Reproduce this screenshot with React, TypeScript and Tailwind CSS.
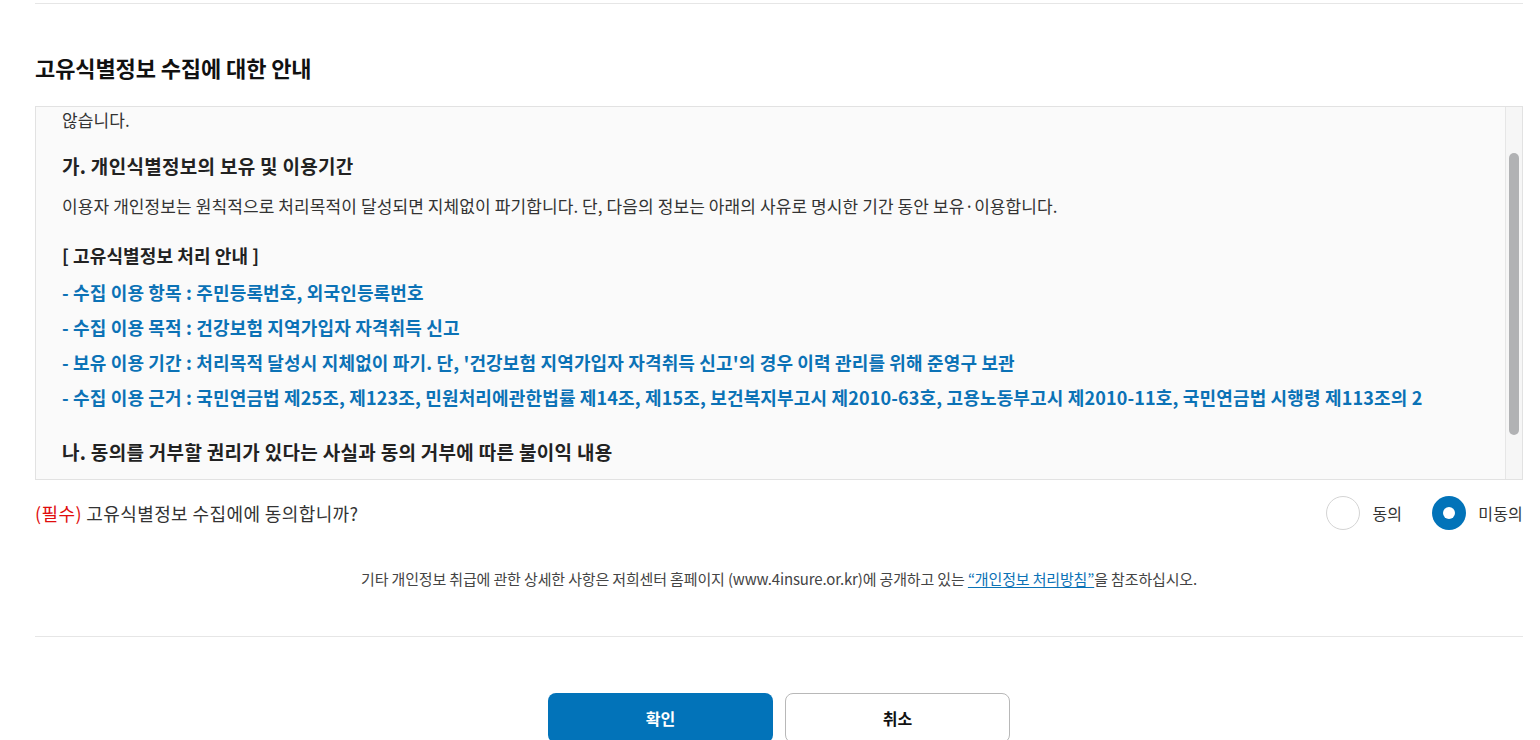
const FONT = "font-['Noto_Sans_CJK_KR','Noto_Sans',sans-serif]";

const ITEMS = [
  { label: "수집 이용 항목", value: "주민등록번호, 외국인등록번호" },
  { label: "수집 이용 목적", value: "건강보험 지역가입자 자격취득 신고" },
  {
    label: "보유 이용 기간",
    value: "처리목적 달성시 지체없이 파기. 단, '건강보험 지역가입자 자격취득 신고'의 경우 이력 관리를 위해 준영구 보관",
  },
  {
    label: "수집 이용 근거",
    value:
      "국민연금법 제25조, 제123조, 민원처리에관한법률 제14조, 제15조, 보건복지부고시 제2010-63호, 고용노동부고시 제2010-11호, 국민연금법 시행령 제113조의 2",
  },
];

function Radio({ label, checked }: { label: string; checked?: boolean }) {
  return (
    <label className="flex items-center gap-[12px]">
      {checked ? (
        <span className="flex h-[34px] w-[34px] items-center justify-center rounded-full bg-[#0273b9]">
          <span className="h-[12px] w-[12px] rounded-full bg-white" />
        </span>
      ) : (
        <span className="h-[34px] w-[34px] rounded-full border border-[#d4d4d4] bg-white" />
      )}
      <span className="text-[16px] tracking-[0.2px] text-[#333]">{label}</span>
    </label>
  );
}

/** 고유식별정보 수집 동의 블록 */
export default function App() {
  return (
    <div className={`${FONT} min-h-[740px] bg-white`}>
      <div className="ml-[35px] w-[1488px]">
        <div className="mt-[3px] h-px bg-[#e6e6e6]" />

        <h2 className="mt-[47px] text-[22px] leading-[33px] font-bold tracking-[-0.1px] text-[#111]">
          고유식별정보 수집에 대한 안내
        </h2>

        <div className="mt-[22px] flex h-[374px] border border-[#e2e2e2] bg-[#fafafa]">
          <div className="flex-1 overflow-hidden pl-[26px]">
            <p className="text-[17px] leading-[25px] tracking-[0.1px] text-[#333]">않습니다.</p>
            <h3 className="mt-[20px] text-[19px] leading-[28px] font-bold tracking-[0.3px] text-[#222]">
              가. 개인식별정보의 보유 및 이용기간
            </h3>
            <p className="mt-[14px] text-[17px] leading-[24px] tracking-[0.1px] text-[#333]">
              이용자 개인정보는 원칙적으로 처리목적이 달성되면 지체없이 파기합니다. 단, 다음의 정보는 아래의 사유로
              명시한 기간 동안 보유·이용합니다.
            </p>
            <p className="mt-[24px] text-[18px] leading-[27px] font-bold tracking-[0.1px] text-[#222]">
              [ 고유식별정보 처리 안내 ]
            </p>
            <ul className="mt-[6px]">
              {ITEMS.map((it) => (
                <li
                  key={it.label}
                  className="text-[18px] leading-[35px] font-bold tracking-[0.15px] whitespace-nowrap text-[#0b72b6]"
                >
                  - {it.label} : {it.value}
                </li>
              ))}
            </ul>
            <h3 className="mt-[23px] text-[19px] leading-[28px] font-bold tracking-[0.3px] text-[#222]">
              나. 동의를 거부할 권리가 있다는 사실과 동의 거부에 따른 불이익 내용
            </h3>
          </div>
          <div className="flex w-[17px] justify-center border-l border-[#e6e6e6] bg-[#f6f6f6] pt-[46px]">
            <div className="h-[282px] w-[10px] rounded-full bg-[#b1b2b4]" />
          </div>
        </div>

        <div className="mt-[16px] flex h-[34px] items-center justify-between">
          <p className="text-[18px] tracking-[0.4px] text-[#333]">
            <span className="text-[#e00d0d]">(필수)</span> 고유식별정보 수집에에 동의합니까?
          </p>
          <div className="flex items-center gap-[30px]">
            <Radio label="동의" />
            <Radio label="미동의" checked />
          </div>
        </div>

        <p className="mt-[38px] text-center text-[15px] leading-[21px] tracking-[-0.15px] text-[#444]">
          기타 개인정보 취급에 관한 상세한 사항은 저희센터 홈페이지 (www.4insure.or.kr)에 공개하고 있는{" "}
          <a className="text-[#0b72b6] underline underline-offset-2">“개인정보 처리방침”</a>을 참조하십시오.
        </p>

        <div className="mt-[47px] h-px bg-[#e6e6e6]" />

        <div className="mt-[56px] flex justify-center gap-[12px]">
          <button className="h-[50px] w-[225px] rounded-[8px] bg-[#0273b9] text-[16px] font-bold text-white">
            확인
          </button>
          <button className="h-[50px] w-[225px] rounded-[8px] border border-[#b8b8b8] bg-white text-[16px] font-bold text-[#111]">
            취소
          </button>
        </div>
      </div>
    </div>
  );
}
